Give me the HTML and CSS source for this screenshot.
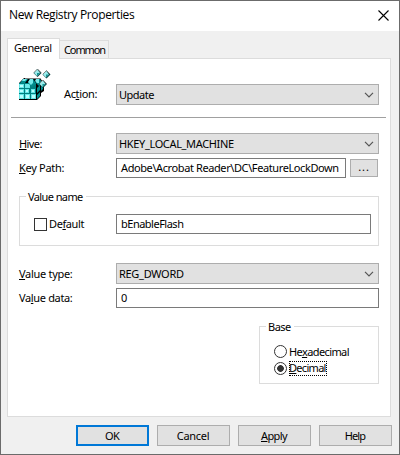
FILE: index.html
```html
<!DOCTYPE html>
<html lang="en">
<head>
<meta charset="utf-8">
<title>New Registry Properties</title>
<link rel="stylesheet" href="styles.css">
</head>
<body>
<main class="window">
  <header class="titlebar">
    <h1 class="title">New Registry Properties</h1>
    <svg class="close" width="11" height="11" viewBox="0 0 11 11"><path d="M.5.5l10 10M10.5.5l-10 10" stroke="#000" stroke-width="1.1" fill="none"/></svg>
  </header>
  <nav class="tabs">
    <div class="tab active"><span class="t-general">General</span></div>
    <div class="tab"><span class="t-common">Common</span></div>
  </nav>
  <section class="panel">
    <div class="row action-row">
      <svg class="regicon" width="36" height="35" viewBox="0 0 36 35">
        <path d="M1 16l5-5h16l3 4h1v9l-3 2v3l-4 4H1z" fill="#000"/>
        <path d="M7 11h15v1H7z" fill="#808080"/>
        <path d="M1 16h17v16H1z" fill="#008080"/>
        <path d="M1 17h5v4H1zM7 17h5v4H7zM1 22h5v4H1zM1 27h5v5H1zM7 22h4v4H7zM7 27h5v5H7zM13 27h5v5h-5zM13 22h4v4h-4z" fill="#62e6e6"/>
        <path d="M2 18h3v2H2zM2 23h3v2H2zM2 28h3v3H2zM8 23h2v2H8zM8 28h3v3H8zM14 28h3v3h-3zM14 23h2v2h-2z" fill="#b8ffff"/>
        <path d="M5 12h5l-3 4H2zM12 12h3l3 4-4 4-4-4zM18 12h4l2 4-3 3-3-3z" fill="#008c8c"/>
        <path d="M5 12h4l-2 2H4zM12 12h3v4l-2 2-3-3zM18 12h3v4h-2l-2-2zM8 17h3v3H8z" fill="#72eaea"/>
        <path d="M19 21l3-3v5l-3 3zM19 28l3-3v4l-3 3zM23 19l2-1v4l-2 2z" fill="#009090"/>
        <path d="M19.5 2l4 4-4 4-4-4zM28.500 3.500l4 4-4 4-4-4zM25 13l4 4-4 4-4-4z" fill="#083c3c"/>
        <path d="M19 2l3 4-3 3-3-3zM28 3.500l3 4-3 3-3-3zM24.500 13l3 4-3 3-3-3z" fill="#9cecec"/>
        <path d="M19 6h3l-3 3zM28 7.500h3l-3 3zM24.500 17h3l-3 3z" fill="#159595"/>
        <path d="M16 5.500l3.500-3.500L23 5.500M25 7l3.500-3.500L32 7M21.500 16.500l3.500-3.500 3.500 3.500" fill="none" stroke="#808080" stroke-width=".9"/>
      </svg>
      <label class="lbl t-action">Ac<u>t</u>ion:</label>
      <div class="select"><span class="t-update">Update</span><svg class="chev" width="10" height="6" viewBox="0 0 10 6"><path d="M1 .8l4 4 4-4" fill="none" stroke="#555" stroke-width="1.2"/></svg></div>
    </div>
    <hr class="rule">
    <div class="row hive-row">
      <label class="lbl t-hive"><u>H</u>ive:</label>
      <div class="select"><span class="t-hklm">HKEY_LOCAL_MACHINE</span><svg class="chev" width="10" height="6" viewBox="0 0 10 6"><path d="M1 .8l4 4 4-4" fill="none" stroke="#555" stroke-width="1.2"/></svg></div>
    </div>
    <div class="row key-row">
      <label class="lbl t-key"><u>K</u>ey Path:</label>
      <div class="input"><span class="t-path">Adobe\Acrobat Reader\DC\FeatureLockDown</span></div>
      <div class="browse"><span class="t-dots">...</span></div>
    </div>
    <div class="group name-group">
      <div class="legend"><span class="t-vname">Value name</span></div>
      <div class="row name-row">
        <i class="check"></i>
        <label class="t-default">De<u>f</u>ault</label>
        <div class="input"><span class="t-flash">bEnableFlash</span></div>
      </div>
    </div>
    <div class="row type-row">
      <label class="lbl t-type"><u>V</u>alue type:</label>
      <div class="select"><span class="t-dword">REG_DWORD</span><svg class="chev" width="10" height="6" viewBox="0 0 10 6"><path d="M1 .8l4 4 4-4" fill="none" stroke="#555" stroke-width="1.2"/></svg></div>
    </div>
    <div class="row data-row">
      <label class="lbl t-data">Va<u>l</u>ue data:</label>
      <div class="input"><span>0</span></div>
    </div>
    <div class="group base-group">
      <div class="legend"><span class="t-base">Base</span></div>
      <div class="radio-row"><i class="radio"></i><label class="t-hex">He<u>x</u>adecimal</label></div>
      <div class="radio-row"><i class="radio on"></i><label class="t-dec focus"><u>D</u>ecimal</label></div>
    </div>
  </section>
  <footer class="buttons">
    <div class="btn primary"><span class="t-ok">OK</span></div>
    <div class="btn"><span class="t-cancel">Cancel</span></div>
    <div class="btn"><span class="t-apply"><u>A</u>pply</span></div>
    <div class="btn"><span class="t-help">Help</span></div>
  </footer>
</main>
</body>
</html>
```
FILE: styles.css
```css
* { box-sizing: border-box; }
body { margin: 0; font: 11px/14px "Noto Sans", "Open Sans", sans-serif; color: #000; }
.window { width: 400px; height: 455px; border: 1px solid #6b6b6b; background: #f0f0f0; display: flex; flex-direction: column; overflow: hidden; }
span, label { white-space: nowrap; letter-spacing: -0.3px; }
u { text-decoration: underline; text-underline-offset: 1px; text-decoration-thickness: 1px; text-decoration-skip-ink: none; }
.titlebar { height: 30px; flex: none; background: #fff; display: flex; align-items: center; justify-content: space-between; padding: 0 10px 2px 8px; }
.title { margin: 0; font: 12px/16px "Open Sans", sans-serif; letter-spacing: -0.38px; }
.tabs { height: 28px; flex: none; display: flex; align-items: flex-end; padding-left: 6px; margin-bottom: -1px; z-index: 1; }
.tab { width: 49px; height: 19px; border: 1px solid #dcdcdc; border-left: 0; padding: 2px 0 0 4px; }
.tab.active { width: 53px; height: 21px; border-left: 1px solid #dcdcdc; border-bottom: 0; background: #fff; padding: 2px 0 0 6px; }
.panel { margin: 0 8px 0 6px; height: 359px; flex: none; border: 1px solid #dcdcdc; background: #fff; display: flex; flex-direction: column; padding: 8px 11px 0; }
.row { display: flex; flex: none; align-items: center; }
.lbl { width: 97px; flex: none; }
.action-row { height: 38px; align-items: flex-start; margin-left: -1px; }
.action-row .lbl { width: 52px; margin: 20px 0 0 10px; }
.action-row .select { margin-top: 17px; }
.regicon { flex: none; }
.select { width: 263px; height: 21px; border: 1px solid #adadad; background: #e1e1e1; display: flex; align-items: center; justify-content: space-between; padding: 1px 4px 0 2px; }
.rule { width: 375px; height: 1px; flex: none; border: 0; background: #a0a0a0; margin: 12px 0 0 -8px; }
.hive-row { margin-top: 15px; }
.key-row { margin-top: 4px; }
.input { width: 263px; height: 20px; border: 1px solid #7a7a7a; background: #fff; padding: 2px 4px; }
.key-row .input { width: 230px; }
.browse { width: 28px; height: 18px; border: 1px solid #adadad; background: #e1e1e1; margin-left: 4px; text-align: center; line-height: 14px; }
.group { border: 1px solid #dcdcdc; flex: none; }
.legend { background: #fff; width: max-content; padding: 0 3px 0 2px; margin: -7px 0 0 6px; height: 14px; }
.name-group { width: 360px; height: 50px; margin-top: 18px; }
.name-row { margin: 10px 0 0 14px; }
.name-row .input { width: 255px; }
.name-row label { width: 67px; margin-left: 2px; }
.check { width: 13px; height: 13px; border: 1px solid #333; flex: none; }
.type-row { margin-top: 17px; }
.data-row { margin-top: 4px; }
.base-group { width: 120px; height: 58px; margin: 18px 0 0 240px; }
.radio-row { display: flex; align-items: center; height: 17px; padding-left: 14px; }
.legend + .radio-row { margin-top: 9px; }
.radio { width: 13px; height: 13px; border: 1px solid #333; border-radius: 50%; flex: none; margin-right: 2px; }
.radio.on { background: radial-gradient(circle, #333 3px, #fff 3.7px); }
.focus { width: 38px; outline: 1px dotted #000; outline-offset: -1px; height: 15px; }
.buttons { display: flex; gap: 8px; padding: 8px 0 0 75px; }
.btn { width: 73px; height: 21px; flex: none; border: 1px solid #adadad; background: #e1e1e1; display: flex; align-items: center; justify-content: center; padding-right: 1px; }
.btn.primary { border: 2px solid #0078d7; }

/* Per-label tracking */
.t-general, .t-default, .t-path { letter-spacing: -0.4px; }
.t-common { letter-spacing: -1.1px; }
.t-action, .t-hklm, .t-data { letter-spacing: -0.35px; }
.t-update, .t-flash, .t-base { letter-spacing: -0.5px; }
.t-hive, .t-vname, .t-hex, .t-ok, .t-apply { letter-spacing: -0.6px; }
.t-dec { letter-spacing: -0.7px; }
.t-help { letter-spacing: -0.9px; }
.t-dots { letter-spacing: 0.9px; }
```
